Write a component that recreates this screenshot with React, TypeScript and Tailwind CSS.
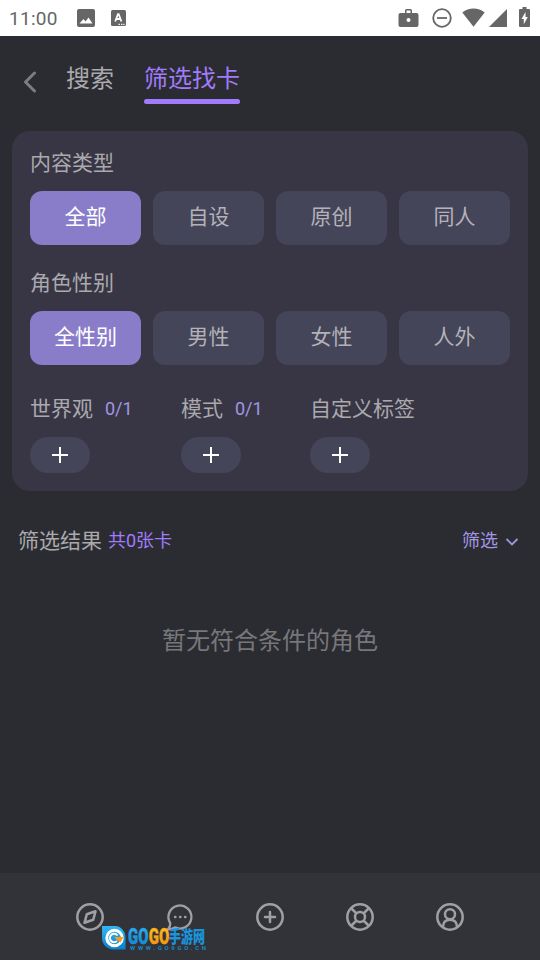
/**
 * Card filter page: category chips, tag pickers, result list and tab bar.
 */
import { useState } from 'react';

const CONTENT_TYPES = ['全部', '自设', '原创', '同人'];
const GENDERS = ['全性别', '男性', '女性', '人外'];

function StatusBar() {
  return (
    <div className="h-9 shrink-0 flex items-center bg-white text-[#666666] pl-[9px] pr-[10px]">
      <span className="w-[49px] pt-px text-[19px] leading-9 tracking-[0.3px] whitespace-nowrap">11:00</span>
      <svg className="ml-[18.500px] size-[18px]" viewBox="0 0 18 18" fill="currentColor">
        <path fillRule="evenodd" d="M2 0h14a2 2 0 0 1 2 2v14a2 2 0 0 1-2 2H2a2 2 0 0 1-2-2V2a2 2 0 0 1 2-2ZM2.500 14.500h13l-4-6-3 4-2-2.500Z" />
      </svg>
      <svg className="ml-[16.500px] w-[15px] h-4" viewBox="0 0 16 16" preserveAspectRatio="none">
        <rect width="16" height="16" rx="1.500" fill="currentColor" />
        <path d="M4.500 11.500 7.400 4.200h.8l2.900 7.300M5.600 9h4.400" fill="none" stroke="#fff" strokeWidth="1.900" />
        <path d="M8 14.300h1.500M10.700 14.300h1.500M13.200 14.300h1.300" stroke="#fff" strokeWidth="1.300" />
      </svg>

      <svg className="ml-auto mb-px w-[21px] h-5" viewBox="0 0 21 20" fill="currentColor">
        <path fillRule="evenodd" d="M2.500 5H7V2.500A1.500 1.500 0 0 1 8.500 1h4A1.500 1.500 0 0 1 14 2.500V5h4.500a2 2 0 0 1 2 2v10a2 2 0 0 1-2 2h-16a2 2 0 0 1-2-2V7a2 2 0 0 1 2-2ZM8.500 2.500V5h4V2.500ZM10.500 10a2 2 0 1 0 0 4 2 2 0 0 0 0-4Z" />
      </svg>
      <svg className="ml-[13px] size-5" viewBox="0 0 20 20" fill="none" stroke="currentColor" strokeWidth="1.800">
        <circle cx="10" cy="10" r="8.800" />
        <path d="M5 10h10" />
      </svg>
      <svg className="ml-[10px] mb-px w-[23px] h-5" viewBox="0 0 23 20" fill="currentColor">
        <path d="M11.500 18.800.3 4.500C6.500-.7 16.500-.7 22.700 4.500Z" />
      </svg>
      <svg className="ml-[4px] size-[18px]" viewBox="0 0 18 18" fill="currentColor">
        <path d="M18 0v18H0Z" />
      </svg>
      <svg className="ml-3 mb-[2px] w-[11px] h-5" viewBox="0 0 11 20" fill="currentColor">
        <path fillRule="evenodd" d="M3.500 0h4v2H10a1 1 0 0 1 1 1v16a1 1 0 0 1-1 1H1a1 1 0 0 1-1-1V3a1 1 0 0 1 1-1h2.500ZM6.500 5 2.500 12h2.300v5.300L8.800 10H6.500Z" />
      </svg>
    </div>
  );
}

type ChipRowProps = {
  title: string;
  options: string[];
  value: string;
  onChange: (value: string) => void;
};

function ChipRow({ title, options, value, onChange }: ChipRowProps) {
  return (
    <section className="h-[120px]">
      <h2 className="h-[42px] pt-0.5 text-[21px] leading-[24px]">{title}</h2>
      <div className="grid grid-cols-4 gap-3">
        {options.map((option) => (
          <button
            key={option}
            onClick={() => onChange(option)}
            className={
              option === value
                ? 'h-[54px] pb-px rounded-xl bg-[#897dca] text-white text-[21px]'
                : 'h-[54px] pb-px rounded-xl bg-[#454559] text-[#b3b2b8] text-[21px]'
            }
          >
            {option}
          </button>
        ))}
      </div>
    </section>
  );
}

function TagPicker({ title, count }: { title: string; count?: string }) {
  return (
    <div>
      <div className="flex items-center h-6 text-[21px] leading-6 whitespace-nowrap">
        {title}
        {count && <span className="ml-3 text-lg leading-6 text-[#a196e4]">{count}</span>}
      </div>
      <button
        className="mt-4 w-[60px] h-9 rounded-full bg-[#454559] flex items-center justify-center"
        aria-label={`添加${title}`}
      >
        <svg className="size-4" viewBox="0 0 16 16" stroke="#fff" strokeWidth="2">
          <path d="M0 8h16M8 0v16" />
        </svg>
      </button>
    </div>
  );
}

function TabBar() {
  return (
    <nav className="h-[87px] shrink-0 bg-[#323338] text-[#a0a0a2] flex items-center justify-between px-[75px]">
      <svg className="size-[30px]" viewBox="0 0 30 30" fill="none" stroke="currentColor" strokeWidth="2.500" strokeLinejoin="round">
        <circle cx="15" cy="15" r="12.700" />
        <path d="m20.500 9.300-2.300 8.500-8.700 3 2.300-8.500Z" />
      </svg>
      <svg className="size-[30px]" viewBox="0 0 30 30" fill="none" stroke="currentColor" strokeWidth="2.300" strokeLinejoin="round">
        <path d="M5.300 21.300A11.500 11.500 0 1 1 10 25.400C8 26.600 6 27.300 3 27.300 4.800 25.500 5.300 23.500 5.300 21.300Z" />
        <path d="M10.200 15h.1M15.200 15h.1M20.200 15h.1" strokeWidth="2.700" strokeLinecap="round" />
      </svg>
      <svg className="size-[30px]" viewBox="0 0 30 30" fill="none" stroke="currentColor" strokeWidth="2.500" strokeLinecap="round">
        <circle cx="15" cy="15" r="12.700" />
        <path d="M10 15h10M15 10v10" />
      </svg>
      <svg className="size-[30px]" viewBox="0 0 30 30" fill="none" stroke="currentColor" strokeWidth="2.500">
        <circle cx="15" cy="15" r="12.700" />
        <circle cx="15" cy="15" r="5" />
        <path d="m6 6 5.500 5.500M24 6l-5.500 5.500M6 24l5.500-5.500M24 24l-5.500-5.500" />
      </svg>
      <svg className="size-[30px]" viewBox="0 0 30 30" fill="none" stroke="currentColor" strokeWidth="2.500">
        <circle cx="15" cy="15" r="12.700" />
        <circle cx="15" cy="12.200" r="5" />
        <path d="M8 25.300C8 20.500 10.500 17.700 15 17.700s7 2.800 7 7.600" />
      </svg>
    </nav>
  );
}

function Watermark() {
  return (
    <div className="absolute left-[102px] top-[922px]">
      <svg className="block w-[112px] h-[34px]" viewBox="0 -4 112 34">
        <defs>
          <linearGradient id="drop" x1="0" y1="0" x2="0" y2="1">
            <stop offset="0" stopColor="#35b7f2" />
            <stop offset="1" stopColor="#087fce" />
          </linearGradient>
          <linearGradient id="gold" x1="0" y1="0" x2="0" y2="1">
            <stop offset="0" stopColor="#ffc928" />
            <stop offset="1" stopColor="#f58a05" />
          </linearGradient>
        </defs>
        <path d="M0 0h13a10.500 11.700 0 0 1 10.500 11.700v11.700H11A11 11.700 0 0 1 0 11.700Z" fill="url(#drop)" />
        <circle cx="12.500" cy="12" r="7.700" fill="none" stroke="#fff" strokeWidth="3" />
        <path d="M15.500 9.500A4.200 4.200 0 1 0 15 15" fill="none" stroke="#fff" strokeWidth="2" />
        <path d="M12 11h9.500l-3 5.500L15 14Z" fill="#f89b16" />
        <g className="font-['Roboto','Noto_Sans_CJK_SC',sans-serif] font-black">
          <text x="26" y="17.500" fontSize="22" textLength="20.500" lengthAdjust="spacingAndGlyphs" fill="url(#drop)" stroke="#1e9fe4" strokeWidth="0.400">GO</text>
          <text x="46.700" y="17.500" fontSize="22" textLength="20.500" lengthAdjust="spacingAndGlyphs" fill="url(#gold)" stroke="#fba515" strokeWidth="0.400">GO</text>
          <text x="67" y="17" fontSize="17" textLength="36" lengthAdjust="spacingAndGlyphs" fill="#1a94dc">手游网</text>
        </g>
        <text x="28" y="23.700" fontSize="6" textLength="76" className="font-['Roboto',sans-serif] font-bold" fill="#1787c6">WWW.GO9GO.CN</text>
      </svg>
    </div>
  );
}

export default function App() {
  const [contentType, setContentType] = useState('全部');
  const [gender, setGender] = useState('全性别');

  return (
    <div className="relative w-[540px] h-[960px] flex flex-col overflow-hidden bg-[#2b2c31] text-[#aaa9ad] font-['Roboto','Noto_Sans_CJK_SC',sans-serif]">
      <StatusBar />

      {/* Top tabs */}
      <header className="h-[95px] shrink-0 flex items-start pl-6 pt-[26px]">
        <svg className="mt-[9px] w-3 h-[22px]" viewBox="0 0 12 22" fill="none" stroke="#7d7d81" strokeWidth="3" strokeLinecap="round" strokeLinejoin="round">
          <path d="M10.500 2 1.500 11l9 9" />
        </svg>
        <button className="ml-[30px] pt-px text-2xl leading-8">搜索</button>
        <button className="ml-[30px] pt-px w-24 text-2xl leading-8 text-[#a17bfb]">
          筛选找卡
          <span className="block mt-1 h-[5px] rounded-sm bg-[#a17bfb]" />
        </button>
      </header>

      {/* Filter panel */}
      <main className="mx-3 h-[360px] shrink-0 rounded-[18px] bg-[#383645] px-[18px] pt-[18px]">
        <ChipRow title="内容类型" options={CONTENT_TYPES} value={contentType} onChange={setContentType} />
        <ChipRow title="角色性别" options={GENDERS} value={gender} onChange={setGender} />
        <div className="flex pt-2">
          <div className="w-[151px]"><TagPicker title="世界观" count="0/1" /></div>
          <div className="w-[129px]"><TagPicker title="模式" count="0/1" /></div>
          <TagPicker title="自定义标签" />
        </div>
      </main>

      {/* Results */}
      <section className="flex-1 flex flex-col pt-[38px]">
        <div className="flex items-center h-6 pl-[18px] pr-[22px]">
          <h2 className="text-[21px] leading-6">筛选结果</h2>
          <span className="ml-[6px] text-lg leading-6 text-[#a17bfb]">共0张卡</span>
          <button className="ml-auto flex items-center text-lg leading-6 text-[#a196e4]">
            筛选
            <svg className="ml-2 mt-px w-3 h-2" viewBox="0 0 12 8" fill="none" stroke="currentColor" strokeWidth="1.800">
              <path d="m.5 1 5.500 5.500L11.500 1" />
            </svg>
          </button>
        </div>
        <p className="mt-[72px] text-center text-2xl leading-8 text-[#77777b]">暂无符合条件的角色</p>
      </section>

      <TabBar />
      <Watermark />
    </div>
  );
}
